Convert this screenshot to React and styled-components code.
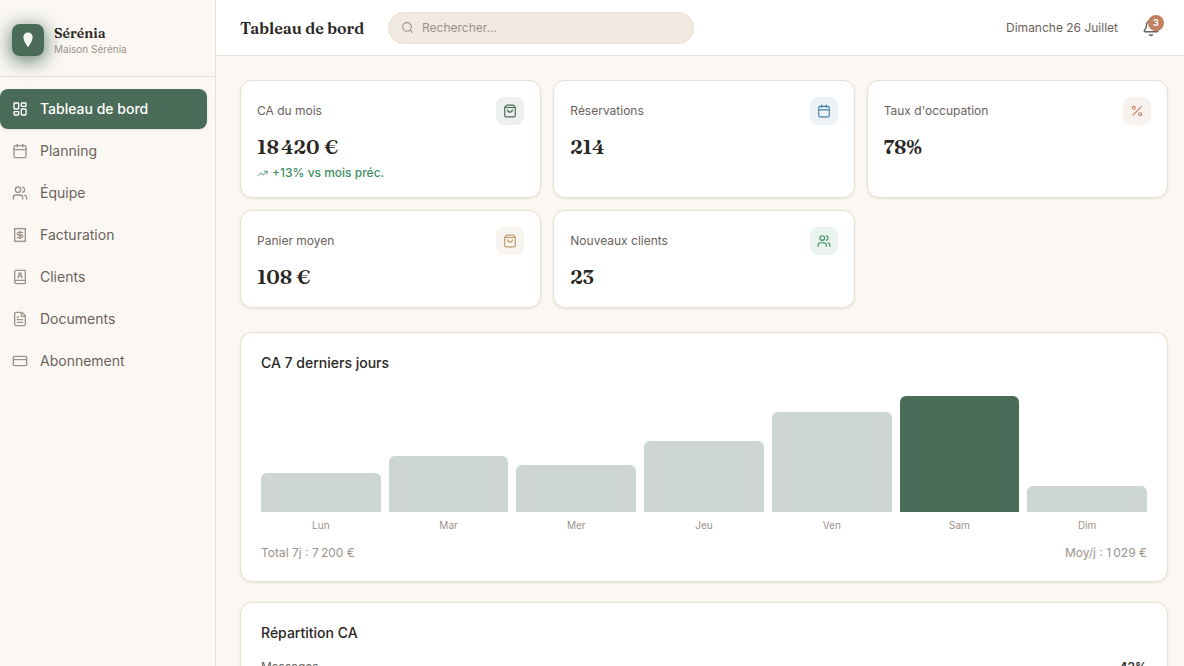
import React from 'react';
import styled, { createGlobalStyle, css } from 'styled-components';
import {
  Bell,
  BookUser,
  Calendar,
  CreditCard,
  FileText,
  LayoutDashboard,
  Percent,
  Receipt,
  Search,
  ShoppingBag,
  TrendingUp,
  Users,
} from 'lucide-react';

const menu = [
  { label: 'Tableau de bord', icon: LayoutDashboard, active: true },
  { label: 'Planning', icon: Calendar },
  { label: 'Équipe', icon: Users },
  { label: 'Facturation', icon: Receipt },
  { label: 'Clients', icon: BookUser },
  { label: 'Documents', icon: FileText },
  { label: 'Abonnement', icon: CreditCard },
];

const stats = [
  { label: 'CA du mois', value: '18\u202f420 €', icon: ShoppingBag, color: '#4a6b57', bg: '#edf0ee', trend: '+13% vs mois préc.' },
  { label: 'Réservations', value: '214', icon: Calendar, color: '#4b82ab', bg: '#edf2f6' },
  { label: "Taux d'occupation", value: '78%', icon: Percent, color: '#c1805f', bg: '#f8f2ef' },
  { label: 'Panier moyen', value: '108 €', icon: ShoppingBag, color: '#bf9a68', bg: '#f8f4ef' },
  { label: 'Nouveaux clients', value: '23', icon: Users, color: '#3d8f5f', bg: '#ebf3ee' },
];

const days = [
  { day: 'Lun', height: 39 },
  { day: 'Mar', height: 56 },
  { day: 'Mer', height: 47 },
  { day: 'Jeu', height: 71 },
  { day: 'Ven', height: 100 },
  { day: 'Sam', height: 116, best: true },
  { day: 'Dim', height: 26 },
];

const App = () => {
  return (
    <>
      <GlobalStyle />
      <Layout>
        <Sidebar>
          <Brand>
            <Logo>
              <svg width="16" height="16" viewBox="0 0 16 16">
                <path d="M8 .5C5.200.5 3.400 2.400 3.400 5c0 3.500 2.700 7.800 4.600 10.200C9.900 12.800 12.600 8.500 12.600 5 12.600 2.400 10.800.5 8 .5Z" fill="#f3f4f2" />
              </svg>
            </Logo>
            <div>
              <BrandName>Sérénia</BrandName>
              <BrandSub>Maison Sérénia</BrandSub>
            </div>
          </Brand>
          <Nav>
            {menu.map(({ label, icon: Icon, active }) => (
              <NavItem key={label} $active={active}>
                <Icon size={16} strokeWidth={2} />
                {label}
              </NavItem>
            ))}
          </Nav>
        </Sidebar>

        <Main>
          <Header>
            <PageTitle>Tableau de bord</PageTitle>
            <SearchBox>
              <Search size={13} strokeWidth={2} />
              <input placeholder="Rechercher..." />
            </SearchBox>
            <Today>Dimanche 26 Juillet</Today>
            <BellButton>
              <Bell size={18} strokeWidth={2} />
              <Badge>3</Badge>
            </BellButton>
          </Header>

          <Content>
            <StatGrid>
              {stats.map(({ label, value, icon: Icon, color, bg, trend }) => (
                <StatCard key={label}>
                  <StatTop>
                    <StatLabel>{label}</StatLabel>
                    <StatIcon $color={color} $bg={bg}>
                      <Icon size={14} strokeWidth={2} />
                    </StatIcon>
                  </StatTop>
                  <StatValue>{value}</StatValue>
                  {trend && (
                    <Trend>
                      <TrendingUp size={11} />
                      {trend}
                    </Trend>
                  )}
                </StatCard>
              ))}
            </StatGrid>

            <Panel>
              <PanelTitle>CA 7 derniers jours</PanelTitle>
              <Chart>
                {days.map(({ day, height, best }) => (
                  <Column key={day}>
                    <Bar $best={best} style={{ height }} />
                    <Day>{day}</Day>
                  </Column>
                ))}
              </Chart>
              <Totals>
                <span>Total 7j : 7{'\u202f'}200 €</span>
                <span>Moy/j : 1{'\u202f'}029 €</span>
              </Totals>
            </Panel>

            <Panel>
              <PanelTitle>Répartition CA</PanelTitle>
              <ShareRow>
                <span>Massages</span>
                <strong>42%</strong>
              </ShareRow>
            </Panel>
          </Content>
        </Main>
      </Layout>
    </>
  );
};

const GlobalStyle = createGlobalStyle`
  * {
    box-sizing: border-box;
  }

  body {
    margin: 0;
    background: #fbf8f3;
    color: #2a2623;
    font-family: Inter, sans-serif;
    font-size: 14px;
    line-height: 20px;
    overflow: hidden;
  }
`;

const serif = css`
  font-family: Fraunces, 'Liberation Serif', serif;
`;

const Layout = styled.div`
  display: flex;
  height: 100vh;
  overflow: hidden;
`;

const Sidebar = styled.aside`
  width: 216px;
  flex-shrink: 0;
  border-right: 1px solid #e8e0d5;
`;

const Brand = styled.div`
  display: flex;
  align-items: center;
  gap: 10px;
  height: 77px;
  padding: 4px 12px 0;
  border-bottom: 1px solid #e8e0d0;
`;

const Logo = styled.div`
  display: flex;
  align-items: center;
  justify-content: center;
  width: 32px;
  height: 32px;
  border-radius: 8px;
  background: #4a6b57;
  box-shadow: 0 4px 20px #4a6b57;
`;

const BrandName = styled.div`
  ${serif}
  font-size: 14px;
  font-weight: 600;
  line-height: 18px;
`;

const BrandSub = styled.div`
  font-size: 10px;
  line-height: 14px;
  color: #9c928a;
`;

const Nav = styled.nav`
  display: flex;
  flex-direction: column;
  gap: 2px;
  padding: 12px 8px 0 0;
`;

const NavItem = styled.a`
  display: flex;
  align-items: center;
  gap: 12px;
  height: 40px;
  padding: 0 12px;
  border-radius: 8px;
  color: #6b625b;

  svg {
    color: #9c928a;
  }

  ${({ $active }) =>
    $active &&
    css`
      background: #4a6b57;
      color: #fff;
      font-weight: 500;
      box-shadow: 0 1px 3px rgba(42, 38, 35, 0.1);

      svg {
        color: #fff;
      }
    `}
`;

const Main = styled.main`
  flex: 1;
  min-width: 0;
`;

const Header = styled.header`
  display: flex;
  align-items: center;
  height: 56px;
  padding: 0 24px;
  background: #fff;
  border-bottom: 1px solid #e8e0d5;
`;

const PageTitle = styled.h1`
  ${serif}
  width: 124px;
  margin: 0 24px 0 0;
  font-size: 16px;
  font-weight: 600;
  letter-spacing: -0.04px;
  line-height: 24px;
  white-space: nowrap;
`;

const SearchBox = styled.label`
  display: flex;
  align-items: center;
  gap: 8px;
  width: 306px;
  height: 32px;
  padding: 0 12px;
  border: 1px solid #e8e0d5;
  border-radius: 16px;
  background: #f0eae0;
  color: #9c928a;

  input {
    flex: 1;
    min-width: 0;
    padding: 0;
    border: 0;
    outline: 0;
    background: none;
    font: 400 12px/16px Inter, sans-serif;
  }

  input::placeholder {
    color: #9c928a;
  }
`;

const Today = styled.span`
  margin-left: auto;
  font-size: 12px;
  color: #6b625b;
`;

const BellButton = styled.div`
  position: relative;
  display: flex;
  margin: 0 0 0 24px;
  color: #6b625b;
`;

const Badge = styled.span`
  position: absolute;
  top: -4px;
  right: -4px;
  width: 16px;
  height: 16px;
  border-radius: 50%;
  background: #c1805f;
  color: #fff;
  font-size: 9px;
  font-weight: 700;
  line-height: 16px;
  text-align: center;
`;

const Content = styled.div`
  padding: 24px 16px 0 24px;
`;

const StatGrid = styled.div`
  display: grid;
  grid-template-columns: repeat(3, 1fr);
  gap: 12px;
  margin-bottom: 24px;
`;

const card = css`
  background: #fff;
  border: 1px solid #e8e0d5;
  border-radius: 12px;
  box-shadow: 0 1px 3px rgba(42, 38, 35, 0.1);
`;

const StatCard = styled.div`
  ${card}
  padding: 16px 16px 14px;
`;

const StatTop = styled.div`
  display: flex;
  align-items: center;
  justify-content: space-between;
  margin-bottom: 8px;
`;

const StatLabel = styled.span`
  font-size: 12px;
  color: #6b625b;
`;

const StatIcon = styled.div`
  display: flex;
  align-items: center;
  justify-content: center;
  width: 28px;
  height: 28px;
  border-radius: 8px;
  background: ${({ $bg }) => $bg};
  color: ${({ $color }) => $color};
`;

const StatValue = styled.div`
  ${serif}
  height: 30px;
  font-size: 20px;
  font-weight: 600;
  letter-spacing: -0.1px;
  line-height: 28px;
`;

const Trend = styled.div`
  display: flex;
  align-items: center;
  gap: 4px;
  height: 20px;
  font-size: 12px;
  font-weight: 500;
  color: #3d8f5f;
`;

const Panel = styled.section`
  ${card}
  height: 250px;
  margin-bottom: 20px;
  padding: 20px;
`;

const PanelTitle = styled.h2`
  margin: 0;
  font-size: 14px;
  font-weight: 500;
  line-height: 20px;
`;

const Chart = styled.div`
  display: flex;
  align-items: flex-end;
  gap: 8px;
  height: 160px;
`;

const Column = styled.div`
  flex: 1;
`;

const Bar = styled.div`
  border-radius: 6px 6px 0 0;
  background: ${({ $best }) => ($best ? '#4a6b57' : '#cdd6d1')};
`;

const Day = styled.div`
  padding-top: 6px;
  font-size: 10px;
  line-height: 15px;
  text-align: center;
  color: #9c928a;
`;

const Totals = styled.div`
  display: flex;
  justify-content: space-between;
  margin-top: 10px;
  font-size: 12px;
  color: #9c928a;
`;

const ShareRow = styled.div`
  display: flex;
  justify-content: space-between;
  margin-top: 15px;
  font-size: 12px;
  line-height: 18px;
  color: #6b625b;

  strong {
    font-weight: 600;
    color: #2a2623;
  }
`;

export default App;
